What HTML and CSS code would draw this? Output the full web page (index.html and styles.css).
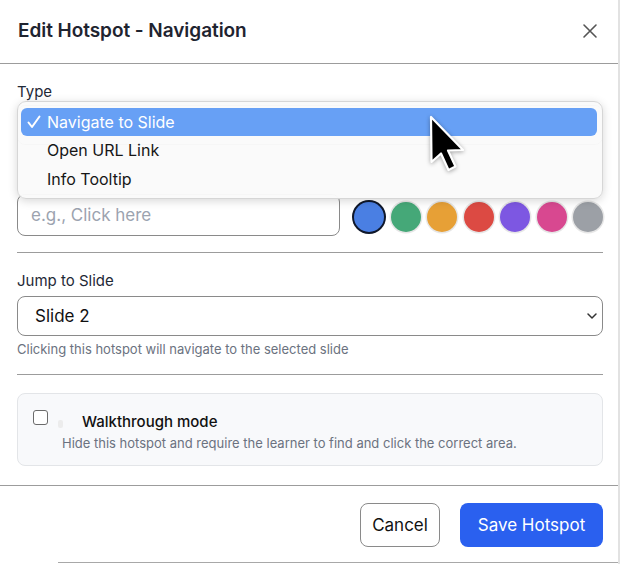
FILE: index.html
```html
<!DOCTYPE html>
<html>
<head>
<meta charset="utf-8">
<link rel="stylesheet" href="styles.css">
</head>
<body>
<div class="modal">
  <header class="header">
    <h1 class="title">Edit Hotspot - Navigation</h1>
    <svg class="close" width="16" height="16" viewBox="0 0 16 16"><path d="M2 2L14 14M14 2L2 14" stroke="#555" stroke-width="1.6" stroke-linecap="round"/></svg>
  </header>
  <main class="body">
    <div class="field field-type">
      <div class="label">Type</div>
      <div class="select select-type"></div>
      <div class="menu">
        <div class="opt opt-active"><svg class="check" width="14" height="14" viewBox="0 0 14 14"><path d="M1.5 7.5L5 12L12.5 1.5" stroke="#fff" stroke-width="2" fill="none" stroke-linecap="round" stroke-linejoin="round"/></svg>Navigate to Slide</div>
        <div class="opt">Open URL Link</div>
        <div class="opt">Info Tooltip</div>
      </div>
      <svg class="cursor" width="40" height="60" viewBox="-3 -3 40 60"><path d="M0 0 L0.5 45 L10 36.5 L17.5 53 L24.5 49.5 L17 33.5 L32 33 Z" fill="#000" stroke="#fff" stroke-width="2.2" stroke-linejoin="round"/></svg>
    </div>
    <div class="row">
      <div class="col-text">
        <div class="ghost"><span class="blob blob-a"></span></div>
        <div class="input">e.g., Click here</div>
      </div>
      <div class="col-color">
        <div class="ghost"><span class="blob blob-b"></span></div>
        <div class="swatches">
          <span class="sw sw-sel" style="background:#4a7fe3"></span>
          <span class="sw" style="background:#45a878"></span>
          <span class="sw" style="background:#e7a036"></span>
          <span class="sw" style="background:#dc4a43"></span>
          <span class="sw" style="background:#7d57e2"></span>
          <span class="sw" style="background:#d84890"></span>
          <span class="sw" style="background:#9ca0a6"></span>
        </div>
      </div>
    </div>
    <hr class="divider">
    <div class="field">
      <div class="label">Jump to Slide</div>
      <div class="select select-slide">
        <span>Slide 2</span>
        <svg width="12" height="8" viewBox="0 0 12 8"><path d="M2 2L6 6L10 2" stroke="#333" stroke-width="1.5" fill="none" stroke-linecap="round" stroke-linejoin="round"/></svg>
      </div>
      <div class="help">Clicking this hotspot will navigate to the selected slide</div>
    </div>
    <hr class="divider divider2">
    <div class="card">
      <div class="card-top">
        <span class="checkbox"></span>
        <span class="dot"></span>
        <span class="card-title">Walkthrough mode</span>
      </div>
      <div class="card-desc">Hide this hotspot and require the learner to find and click the correct area.</div>
    </div>
  </main>
  <footer class="footer">
    <button class="btn btn-cancel">Cancel</button>
    <button class="btn btn-save">Save Hotspot</button>
  </footer>
  <div class="bottom-line"></div>
</div>
</body>
</html>
```
FILE: styles.css
```css
* { box-sizing: border-box; }
html, body { margin: 0; padding: 0; background: #fff; }
body { font-family: Inter, "Noto Sans", "Liberation Sans", sans-serif; color: #111827; }
.modal {
  width: 620px;
  height: 564px;
  position: relative;
  overflow: hidden;
  border-right: 2px solid #e2e2e2;
}
.header {
  height: 64px;
  display: flex;
  align-items: center;
  justify-content: space-between;
  padding: 0 20px 2px 18px;
  border-bottom: 1.5px solid #9c9c9c;
}
.title {
  margin: 0;
  font-size: 19px;
  font-weight: 600;
  color: #1f2430;
  letter-spacing: -0.05px;
}
.close { display: block; }
.body { padding: 0 15px 0 17px; }
.field-type { position: relative; padding-top: 19px; }
.label { font-size: 15px; line-height: 18px; color: #1f2937; }
.select {
  height: 40px;
  border: 1px solid #8a8a8a;
  border-radius: 8px;
  display: flex;
  align-items: center;
  justify-content: space-between;
  padding: 0 4px 0 17px;
  font-size: 17px;
  color: #111;
}
.select-type { margin-top: 4px; }
.menu {
  position: absolute;
  top: 37px;
  left: 0;
  width: 586px;
  height: 98px;
  background: rgba(250, 250, 250, 0.97);
  border: 1px solid #d6d6d6;
  border-radius: 9px;
  box-shadow: 0 2px 10px rgba(0,0,0,0.16);
  padding: 6px 5px 0 3px;
  z-index: 2;
}
.opt {
  height: 29px;
  line-height: 29px;
  font-size: 16px;
  padding-left: 26px;
  color: #161616;
  position: relative;
}
.opt-active {
  height: 28px;
  line-height: 28px;
  background: #67a0f5;
  border-radius: 6px;
  color: #fff;
}
.check {
  position: absolute;
  left: 6px;
  top: 7px;
}
.cursor {
  position: absolute;
  left: 411px;
  top: 50px;
  z-index: 3;
  filter: drop-shadow(0 1px 2px rgba(0,0,0,0.35));
}
.row {
  display: flex;
  gap: 14px;
  margin-top: 26px;
}
.col-text { width: 323px; }
.ghost { height: 18px; position: relative; }
.blob {
  position: absolute;
  top: 3px;
  height: 12px;
  border-radius: 6px;
  background: #e8e8e8;
}
.blob-a { left: 9px; width: 16px; }
.blob-b { left: 2px; width: 34px; background: #efefef; }
.input {
  margin-top: 5px;
  height: 42px;
  border: 1px solid #8a8a8a;
  border-radius: 8px;
  display: flex;
  align-items: center;
  padding-left: 13px;
  font-size: 17px;
  color: #9ca3af;
}
.col-color { flex: 1; }
.swatches {
  display: flex;
  gap: 6.5px;
  margin-top: 13px;
}
.sw {
  width: 30px;
  height: 30px;
  border-radius: 50%;
  display: block;
  box-shadow: 0 0 0 1.5px #e6e6e6;
}
.sw-sel { box-shadow: 0 0 0 2px #0f172a; }
.divider {
  border: 0;
  border-top: 1.5px solid #9c9c9c;
  margin: 16px 0 0 0;
}
.field { padding-top: 19px; }
.select-slide { margin-top: 6px; }
.select-slide span { font-size: 17px; }
.help {
  margin-top: 5px;
  font-size: 13px;
  line-height: 16px;
  color: #6b7280;
}
.divider2 { margin-top: 17px; }
.card {
  margin-top: 18px;
  height: 73px;
  border: 1px solid #e3e5e8;
  border-radius: 8px;
  background: #f8f9fb;
  padding: 16px 14px 0 15px;
}
.card-top { display: flex; align-items: flex-start; }
.checkbox {
  width: 15px;
  height: 15px;
  border: 1.5px solid #6b6b6b;
  border-radius: 3px;
  background: #fff;
  display: block;
}
.dot {
  width: 5px;
  height: 8px;
  background: #ececec;
  border-radius: 2px;
  margin: 10px 0 0 10px;
}
.card-title {
  font-size: 15px;
  font-weight: 500;
  line-height: 18px;
  margin: 3px 0 0 19px;
  color: #111;
}
.card-desc {
  font-size: 13px;
  line-height: 16px;
  color: #6b7280;
  margin: 4px 0 0 29px;
}
.footer {
  margin-top: 19px;
  border-top: 1.5px solid #9c9c9c;
  display: flex;
  justify-content: flex-end;
  gap: 20px;
  padding: 17px 15px 0 0;
}
.btn {
  height: 44px;
  border-radius: 8px;
  font-family: Inter, "Noto Sans", "Liberation Sans", sans-serif;
  font-size: 17px;
  cursor: pointer;
}
.btn-cancel {
  width: 80px;
  background: #fff;
  border: 1px solid #8a8a8a;
  color: #111;
}
.btn-save {
  width: 143px;
  background: #2a60ef;
  border: 0;
  color: #fff;
}
.bottom-line {
  position: absolute;
  left: 58px;
  right: 0;
  bottom: 1px;
  border-top: 1px solid #a8a8a8;
}
```
